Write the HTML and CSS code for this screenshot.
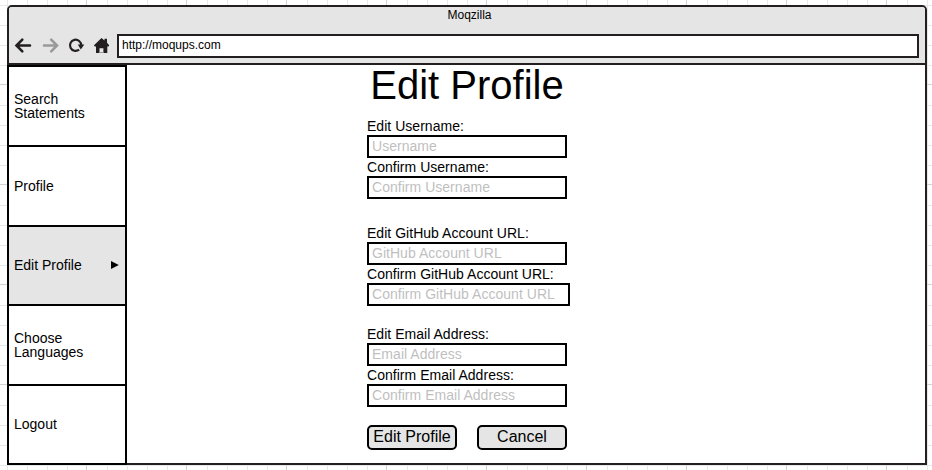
FILE: index.html
```html
<!DOCTYPE html>
<html lang="en">
<head>
<meta charset="utf-8">
<title>Edit Profile</title>
<link rel="stylesheet" href="styles.css">
</head>
<body>
<div class="window">
  <header class="chrome">
    <div class="window-title">Moqzilla</div>
    <div class="toolbar">
      <svg class="icons" width="110" height="24" viewBox="0 0 110 24">
        <g fill="none" stroke="#231f20" stroke-width="2.600" stroke-linecap="round">
          <path d="M21 11.500H8.500M13.300 5.700L7.500 11.500l5.800 5.800"/>
          <path stroke="#999" d="M35 11.500h12.500M42.200 5.700l5.800 5.800-5.800 5.800"/>
          <path stroke-width="2.200" stroke-linecap="butt" d="M70.100 15.700A5.600 5.600 0 1 1 72.200 11.400"/>
        </g>
        <path fill="#231f20" d="M68.800 10.500h6.500l-3.500 5z"/>
        <path fill="#231f20" d="M92.500 4l3 2.500V4.800h2.500v4l2.200 2.500-.6 1.200h-1.300V19h-3.900v-4.800h-3.900V19h-3.500v-6.500h-1.300l-.7-1.200z"/>
        <path fill="#999" d="M90.500 18h3.900v1h-3.900z"/>
      </svg>
      <div class="address">http://moqups.com</div>
    </div>
  </header>
  <div class="body">
    <nav class="menu">
      <a class="item">Search Statements</a>
      <a class="item">Profile</a>
      <a class="item short selected">Edit Profile<svg class="arrow" width="8" height="8" viewBox="0 0 8 8"><path d="M0 0l7.800 4L0 8z"/></svg></a>
      <a class="item">Choose Languages</a>
      <a class="item short">Logout</a>
    </nav>
    <main class="content">
      <h1>Edit Profile</h1>
      <form>
        <section class="username">
          <label>Edit Username:</label>
          <input type="text" placeholder="Username">
          <label>Confirm Username:</label>
          <input type="text" placeholder="Confirm Username">
        </section>
        <section class="github">
          <label>Edit GitHub Account URL:</label>
          <input type="text" placeholder="GitHub Account URL">
          <label>Confirm GitHub Account URL:</label>
          <input class="wide" type="text" placeholder="Confirm GitHub Account URL">
        </section>
        <section class="email">
          <label>Edit Email Address:</label>
          <input type="text" placeholder="Email Address">
          <label>Confirm Email Address:</label>
          <input type="text" placeholder="Confirm Email Address">
        </section>
        <div class="actions">
          <button type="button">Edit Profile</button>
          <button type="button">Cancel</button>
        </div>
      </form>
    </main>
  </div>
</div>
</body>
</html>
```

FILE: styles.css
```css
* {
  box-sizing: border-box;
}

body {
  margin: 0;
  height: 470px;
  padding: 5px 5px 5px 7px;
  overflow: hidden;
  font-family: "Liberation Sans", Arial, sans-serif;
  font-size: 14px;
  color: #000;
  background-color: #fff;
  background-image:
    linear-gradient(90deg, transparent 79px, #d3d3d3 79px, #d3d3d3 80px, transparent 80px),
    linear-gradient(transparent 79px, #d3d3d3 79px, #d3d3d3 80px, transparent 80px),
    linear-gradient(90deg, #e8e8e8 1px, transparent 1px, transparent 20px, #e8e8e8 20px, #e8e8e8 21px, transparent 21px, transparent 40px, #e8e8e8 40px, #e8e8e8 41px, transparent 41px, transparent 60px, #e8e8e8 60px, #e8e8e8 61px, transparent 61px),
    linear-gradient(#e8e8e8 1px, transparent 1px, transparent 20px, #e8e8e8 20px, #e8e8e8 21px, transparent 21px, transparent 40px, #e8e8e8 40px, #e8e8e8 41px, transparent 41px, transparent 60px, #e8e8e8 60px, #e8e8e8 61px, transparent 61px);
  background-size: 100px 100px;
  background-position: 7px 5px;
}

.window {
  width: 920px;
  height: 460px;
  border: 2px solid #231f20;
  border-radius: 5px 5px 0 0;
  background: #fff;
}

.chrome {
  height: 58px;
  background: #e5e5e5;
  border-bottom: 2px solid #231f20;
  border-radius: 3px 3px 0 0;
  font-size: 12px;
}

.window-title {
  height: 27px;
  padding: 1px 0 0 5px;
  line-height: 14px;
  text-align: center;
}

.toolbar {
  display: flex;
  height: 24px;
}

.icons {
  flex: none;
  margin-right: -2px;
}

.address {
  width: 802px;
  height: 24px;
  padding-left: 3px;
  border: 2px solid #231f20;
  background: #fff;
  line-height: 18px;
}

.body {
  display: flex;
}

.menu {
  width: 120px;
  height: 400px;
  margin-left: -2px;
  border: 2px solid #000;
  border-bottom: 0;
}

.item {
  display: flex;
  align-items: center;
  justify-content: space-between;
  height: 80px;
  padding: 0 6px 0 5px;
  border-bottom: 2px solid #000;
  line-height: 14px;
}

.short {
  height: 79px;
  padding-bottom: 1px;
}

.selected {
  background: #e5e5e5;
}

.content {
  padding-left: 240px;
}

h1 {
  width: 200px;
  height: 53px;
  margin: 0;
  font-size: 40px;
  font-weight: normal;
  line-height: 40px;
  text-align: center;
}

section {
  display: flex;
  flex-direction: column;
  align-items: flex-start;
}

.username {
  height: 107px;
}

.github {
  height: 101px;
}

.email {
  height: 99px;
}

label {
  height: 18px;
  line-height: 18px;
  letter-spacing: 0.03px;
  white-space: nowrap;
}

label:first-child {
  height: 17px;
  line-height: 16px;
}

input {
  width: 200px;
  height: 23px;
  padding: 0 3px 2px;
  border: 2px solid #000;
  border-radius: 0;
  background: #fff;
  font: inherit;
  letter-spacing: 0.03px;
}

.wide {
  width: 203px;
}

input::placeholder {
  color: #bfbfbf;
}

.actions {
  display: flex;
  gap: 20px;
}

button {
  width: 90px;
  height: 25px;
  padding: 0 0 2px;
  border: 2px solid #000;
  border-radius: 5px;
  background: #e5e5e5;
  color: #000;
  font: 16px "Liberation Sans", Arial, sans-serif;
  white-space: nowrap;
}
```
